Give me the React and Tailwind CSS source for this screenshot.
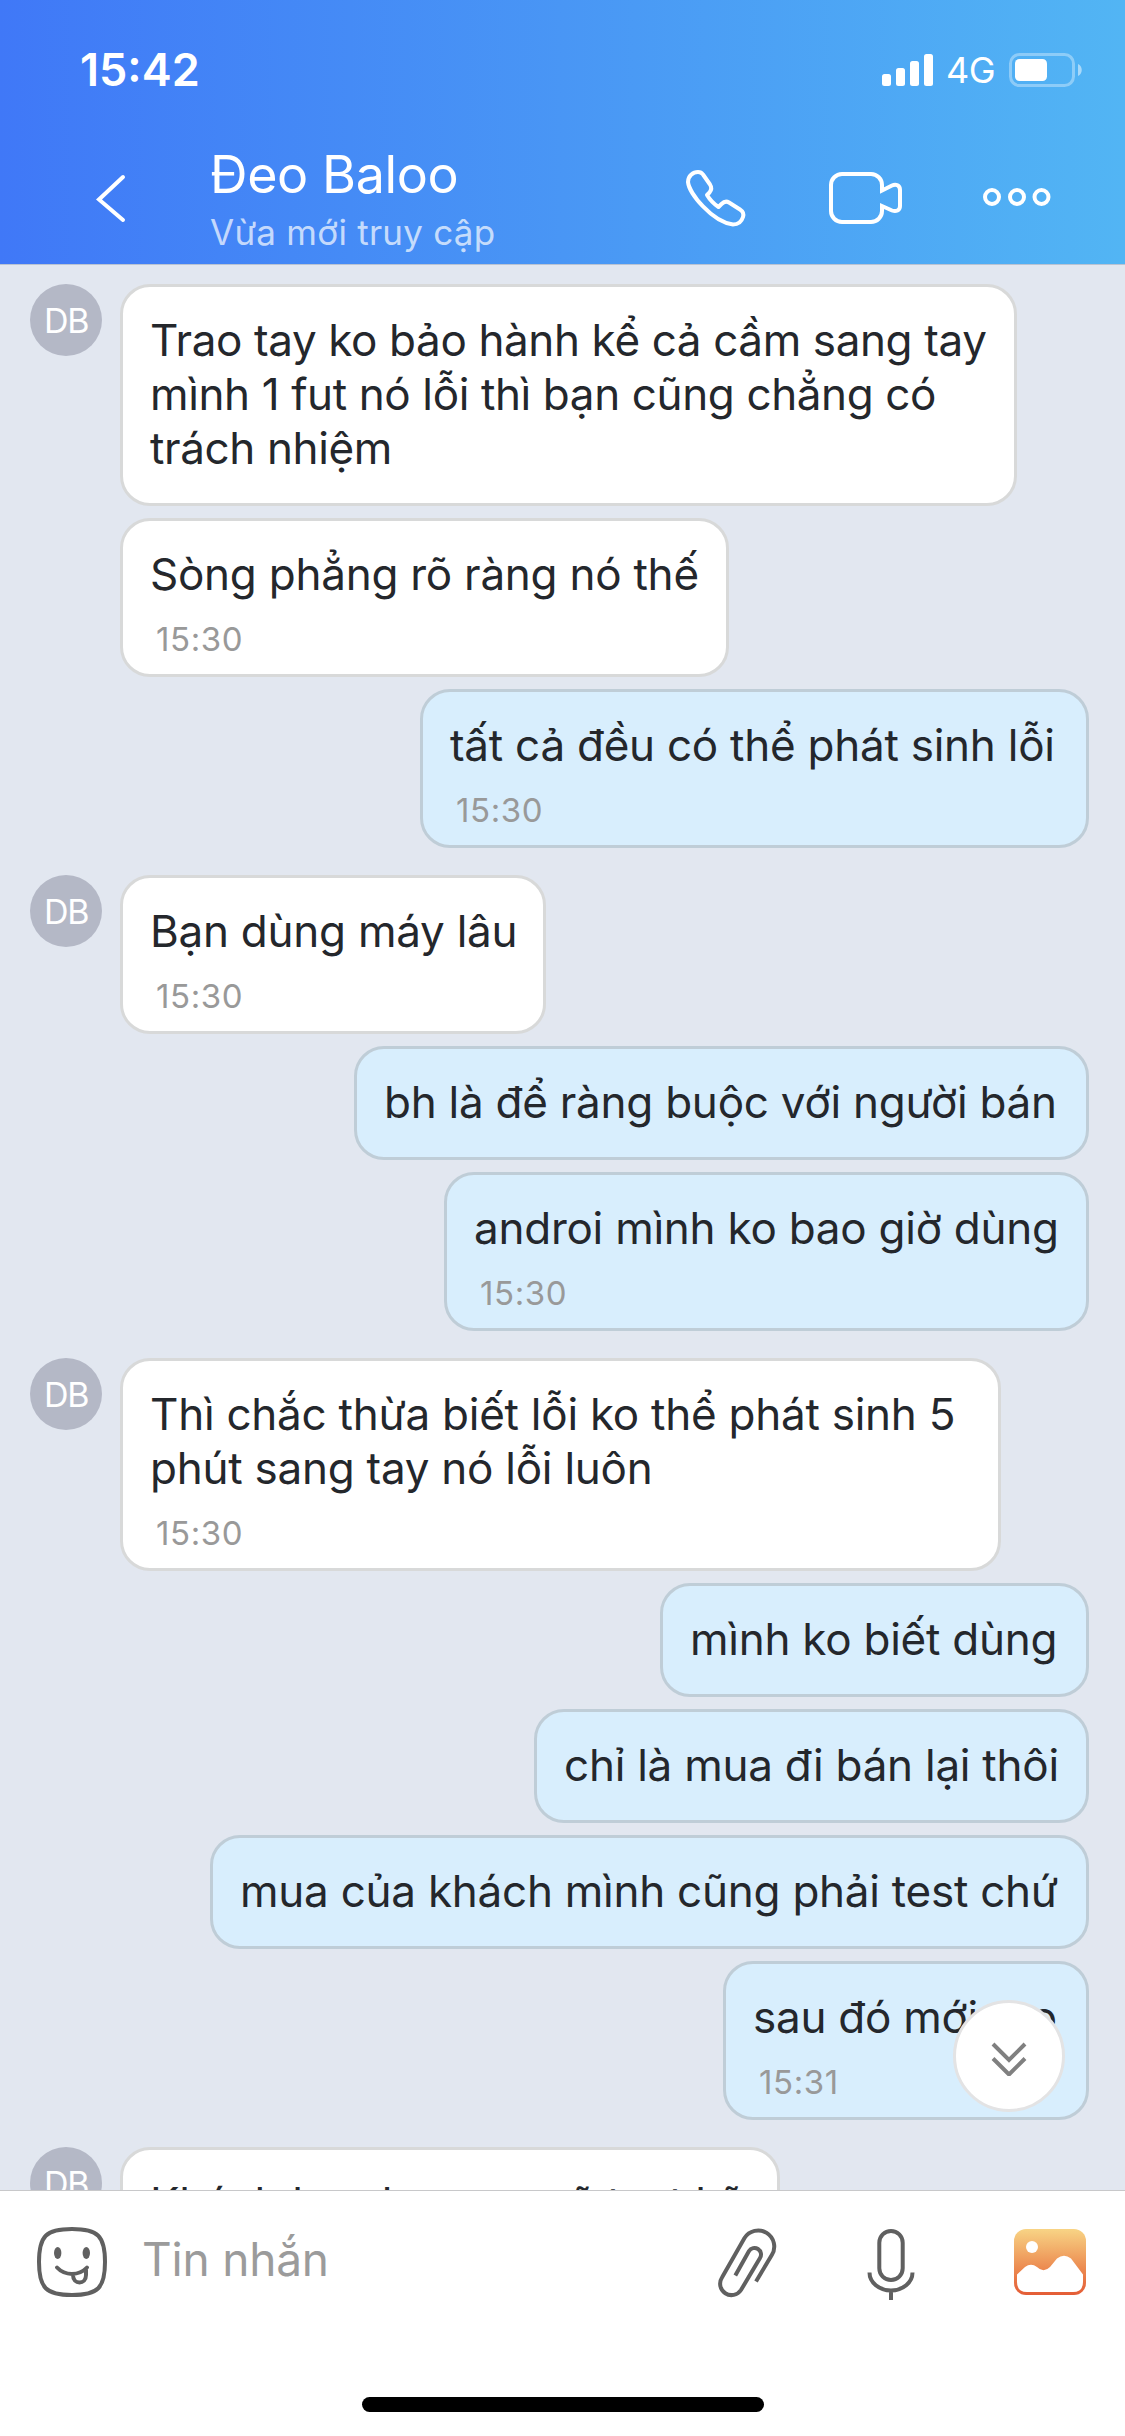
import React from 'react';
import clsx from 'clsx';

const messages = [
  { id: 1, lines: ['Trao tay ko bảo hành kể cả cầm sang tay', 'mình 1 fut nó lỗi thì bạn cũng chẳng có', 'trách nhiệm'], avatar: true, size: 'w-[897px] tracking-[-0.38px]' },
  { id: 2, lines: ['Sòng phẳng rõ ràng nó thế'], time: '15:30', size: 'w-[609px]' },
  { id: 3, mine: true, lines: ['tất cả đều có thể phát sinh lỗi'], time: '15:30', size: 'w-[669px]' },
  { id: 4, lines: ['Bạn dùng máy lâu'], time: '15:30', avatar: true, size: 'w-[426px]' },
  { id: 5, mine: true, lines: ['bh là để ràng buộc với người bán'], size: 'w-[735px]' },
  { id: 6, mine: true, lines: ['androi mình ko bao giờ dùng'], time: '15:30', size: 'w-[645px]' },
  { id: 7, lines: ['Thì chắc thừa biết lỗi ko thể phát sinh 5', 'phút sang tay nó lỗi luôn'], time: '15:30', avatar: true, size: 'w-[881px]' },
  { id: 8, mine: true, lines: ['mình ko biết dùng'], size: 'w-[429px]' },
  { id: 9, mine: true, lines: ['chỉ là mua đi bán lại thôi'], size: 'w-[555px]' },
  { id: 10, mine: true, lines: ['mua của khách mình cũng phải test chứ'], size: 'w-[879px]' },
  { id: 11, mine: true, lines: ['sau đó mới rao'], time: '15:31', size: 'w-[366px]' },
  { id: 12, lines: ['Khách bạn họ mua sẽ test kỹ'], time: '15:31', avatar: true, size: 'w-[660px]' },
];

function StatusBar() {
  return (
    <div className="flex h-[135px] items-start justify-between pt-[43px] pr-[42px] pl-[80px] text-white">
      <span className="text-[45px] leading-[54px] font-semibold">15:42</span>
      <div className="flex items-center pt-[9px]">
        <svg className="h-[34px] w-[51px]" viewBox="0 0 51 34" fill="currentColor">
          <rect x="0" y="21" width="9" height="12" rx="2.5" />
          <rect x="14" y="15" width="9" height="18" rx="2.5" />
          <rect x="28" y="8" width="9" height="25" rx="2.5" />
          <rect x="42" y="1" width="9" height="32" rx="2.5" />
        </svg>
        <span className="w-[76px] pt-px pl-[13px] text-[36px] leading-[34px] tracking-[-0.5px]">4G</span>
        <svg className="h-[34px] w-[74px]" viewBox="0 0 74 34">
          <rect x="1.5" y="1.5" width="63" height="31" rx="9" fill="none" stroke="#fff" strokeOpacity="0.35" strokeWidth="3" />
          <rect x="6" y="6" width="32" height="22" rx="4.5" fill="#fff" />
          <path d="M69 11c5 2 5 10 0 12z" fill="#fff" fillOpacity="0.5" />
        </svg>
      </div>
    </div>
  );
}

function ChatHeader() {
  return (
    <div className="flex h-[129px] items-start text-white">
      <svg className="mt-[36px] ml-[92px] h-[56px] w-[40px]" viewBox="0 0 40 56" fill="none" stroke="currentColor" strokeWidth="4" strokeLinecap="round">
        <path d="M31 6 7 28.5 31 49" />
      </svg>
      <div className="ml-[78px] w-[460px] pt-[8px]">
        <div className="text-[52px] leading-[64px] tracking-[-0.4px]">Đeo Baloo</div>
        <div className="text-[35px] leading-[50px] tracking-[0.25px] text-white/70">Vừa mới truy cập</div>
      </div>
      <svg className="mt-[29px] ml-[6px] h-[70px] w-[80px]" viewBox="676 164 80 70" fill="none" stroke="currentColor" strokeWidth="4" strokeLinejoin="round">
        <path d="M688 182C688 176 693 172 698 172C700 172 702 173 703 174.500L710 184.500C712 187.500 711.500 190 709.500 192.500L707 195C710 200 714 204 718.500 207L721.500 204C724 201.500 726.500 201 729 202.500L740 209.500C743 211.500 744 214 743 217C741.500 222 738 224.500 733 224.500C712 222 689 193 688 182Z" />
      </svg>
      <svg className="mt-[29px] ml-[68px] h-[70px] w-[86px]" viewBox="824 164 86 70" fill="none" stroke="currentColor" strokeWidth="4">
        <path d="M882 190.500V185a11 11 0 0 0-11-11H842a11 11 0 0 0-11 11V211a11 11 0 0 0 11 11H871a11 11 0 0 0 11-11V206L892 210.500C896 212 900 210.500 900 206V190C900 185.500 896 183.500 892 185.500Z" />
      </svg>
      <svg className="mt-[51px] ml-[72px] h-[22px] w-[70px]" viewBox="982 186 70 22" fill="none" stroke="currentColor" strokeWidth="4">
        <circle cx="992" cy="197" r="7" />
        <circle cx="1017" cy="197" r="7" />
        <circle cx="1041.5" cy="197" r="7" />
      </svg>
    </div>
  );
}

function Message({ message, afterMine }) {
  const { mine, lines, time, avatar, size } = message;

  return (
    <div className={clsx('flex shrink-0 items-start pr-9 pl-[30px] tracking-[-0.25px]', mine && 'justify-end', afterMine && !mine ? 'mt-[27px]' : 'mt-3')}>
      {!mine && (
        <div className="w-[90px]">
          {avatar && (
            <div className="flex h-[72px] w-[72px] items-center justify-center rounded-full bg-[#b4b8c6] text-[34px] tracking-[-1.5px] text-white">
              DB
            </div>
          )}
        </div>
      )}
      <div
        className={clsx(
          'rounded-[30px] border-3 px-[27px] pt-[26px] text-[44px] leading-[54px] whitespace-nowrap text-[#24272c]',
          size,
          time ? 'pb-[15px]' : 'pb-[28px]',
          mine ? 'border-[#bfcdd7] bg-[#d8eefd]' : 'border-[#d8d9d9] bg-white'
        )}
      >
        {lines.map((line) => (
          <div key={line}>{line}</div>
        ))}
        {time && <div className="mt-[18px] pl-1.5 text-[33px] leading-[40px] tracking-[0.6px] text-[#999]">{time}</div>}
      </div>
    </div>
  );
}

function Composer() {
  return (
    <div className="flex h-[246px] flex-col items-center justify-between border-t border-[#c8c8ca] bg-white pb-6">
      <div className="flex w-full items-start pt-[35px] pl-[36px] text-[#606060]">
        <svg className="h-[72px] w-[72px]" viewBox="36 2226 72 72" fill="none" stroke="currentColor" strokeWidth="4" strokeLinecap="round">
          <path d="M72 2229C98 2229 105 2236 105 2262S98 2295 72 2295 39 2288 39 2262 46 2229 72 2229Z" />
          <ellipse cx="57.700" cy="2253" rx="3.700" ry="6" fill="currentColor" stroke="none" />
          <ellipse cx="86.300" cy="2253" rx="3.700" ry="6" fill="currentColor" stroke="none" />
          <path d="M57 2267.500C65 2276 79 2276 87 2267.500M73 2275C73 2285 86 2285 86 2275V2270" />
        </svg>
        <div className="ml-[34px] w-[571px] text-[46px] leading-[66px] tracking-[-0.2px] text-[#9b9b9b]">Tin nhắn</div>
        <svg className="h-[80px] w-[70px]" viewBox="713 2226 70 80" fill="none" stroke="currentColor" strokeWidth="4">
          <path d="M756 2281.500 771.800 2255A16 16 0 0 0 744.500 2238L722 2277.500A11.200 11.200 0 0 0 741 2290L760 2258A6.500 6.500 0 0 0 749 2251L735.300 2275.500" />
        </svg>
        <svg className="ml-[79px] h-[80px] w-[60px]" viewBox="862 2226 60 80" fill="none" stroke="currentColor" strokeWidth="4">
          <rect x="879.300" y="2231" width="23.400" height="49" rx="11.700" />
          <path d="M869.500 2272.500A21.500 18 0 0 0 912.500 2272.500M891 2290V2300" />
        </svg>
        <svg className="ml-[92px] h-[72px] w-[72px]" viewBox="1014 2226 72 72">
          <defs>
            <linearGradient id="photo" x1="0" y1="0" x2="0" y2="1">
              <stop offset="0" stopColor="#f8d485" />
              <stop offset="0.6" stopColor="#ec8a50" />
              <stop offset="1" stopColor="#e45c36" />
            </linearGradient>
          </defs>
          <rect x="1014" y="2229" width="72" height="66" rx="12" fill="url(#photo)" />
          <circle cx="1032" cy="2247" r="6" fill="#fff" />
          <path d="M1017 2274.500 1025 2267Q1031 2262.500 1037 2267 1043.500 2273.500 1050 2267L1057 2258.500Q1064 2253 1071 2258.500L1083 2274.500V2282Q1083 2292 1073 2292H1027Q1017 2292 1017 2282Z" fill="#fff" />
        </svg>
      </div>
      <div className="h-[15px] w-[402px] rounded-full bg-black" />
    </div>
  );
}

function App() {
  return (
    <div className="flex h-[2436px] w-[1125px] flex-col overflow-hidden bg-[#e2e7f0] font-['Inter',sans-serif]">
      <header className="h-[265px] shrink-0 border-b border-[#b9c3d3] bg-linear-to-r from-[#4078f7] via-[#4996f5] to-[#52b5f4]">
        <StatusBar />
        <ChatHeader />
      </header>

      <main className="relative h-[1925px] shrink-0 overflow-hidden">
        <div className="flex flex-col pt-[7px]">
          {messages.map((message, i) => (
            <Message key={message.id} message={message} afterMine={messages[i - 1]?.mine} />
          ))}
        </div>
        {/* Jump to latest */}
        <button className="absolute top-[1735px] left-[953px] flex h-[112px] w-[112px] items-center justify-center rounded-full border-3 border-[#e3e3e4] bg-white">
          <svg className="h-[40px] w-[40px]" viewBox="988 2036 40 40" fill="none" stroke="#808080" strokeWidth="4">
            <path d="M992 2044 1008 2060 1024 2044M992 2058.500 1008 2074.500 1024 2058.500" />
          </svg>
        </button>
      </main>

      <Composer />
    </div>
  );
}

export default App;
